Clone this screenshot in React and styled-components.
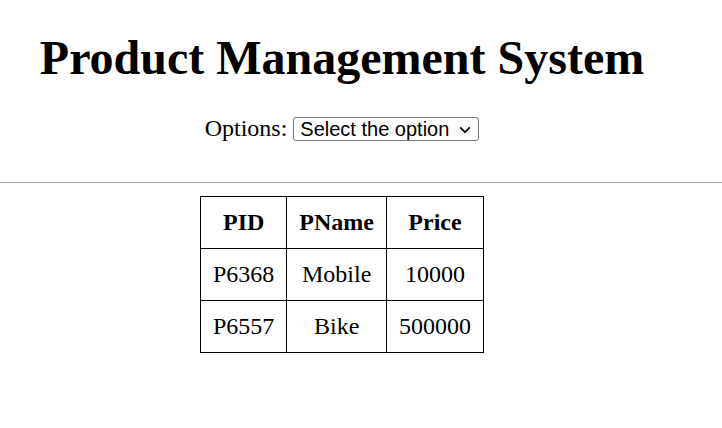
import React from 'react'
import styled, { createGlobalStyle } from 'styled-components'

const products = [
  { pid: 'P6368', pname: 'Mobile', price: '10000' },
  { pid: 'P6557', pname: 'Bike', price: '500000' },
]

export default function App() {
  return (
    <>
      <GlobalStyle />
      <Page>
        <Top>
          <Title>Product Management System</Title>
          <OptionsRow>
            <Label htmlFor="opt">Options:</Label>
            <SelectWrap>
              <Select id="opt" defaultValue="">
                <option value="">Select the option</option>
                <option value="add">Add product</option>
                <option value="view">View products</option>
              </Select>
              <Chevron viewBox="0 0 12 8" aria-hidden="true">
                <path d="M1.2 1.4 L6 6.2 L10.8 1.4" fill="none" stroke="#000" strokeWidth="1.8" />
              </Chevron>
            </SelectWrap>
          </OptionsRow>
        </Top>
        <Rule />
        <Content>
          <Table>
            <thead>
              <tr>
                <Head>PID</Head>
                <Head>PName</Head>
                <Head>Price</Head>
              </tr>
            </thead>
            <tbody>
              {products.map((p) => (
                <tr key={p.pid}>
                  <Cell>{p.pid}</Cell>
                  <Cell>{p.pname}</Cell>
                  <Cell>{p.price}</Cell>
                </tr>
              ))}
            </tbody>
          </Table>
        </Content>
      </Page>
    </>
  )
}

const GlobalStyle = createGlobalStyle`
  body {
    margin: 0;
    background: #fff;
    color: #000;
    font-family: "Liberation Serif", "Times New Roman", serif;
  }
`
const Page = styled.div`
  width: 684px;
`
const Top = styled.div`
  text-align: center;
  padding-top: 26px;
`
const Title = styled.h1`
  margin: 0;
  font-size: 48px;
  font-weight: bold;
  line-height: 64px;
`
const OptionsRow = styled.div`
  margin-top: 25px;
  display: flex;
  justify-content: center;
  align-items: center;
  gap: 6px;
`
const Label = styled.label`
  font-size: 24px;
`
const SelectWrap = styled.span`
  position: relative;
  display: inline-flex;
`
const Select = styled.select`
  appearance: none;
  font-family: "Liberation Sans", Arial, sans-serif;
  font-size: 20px;
  line-height: 22px;
  height: 24px;
  width: 186px;
  box-sizing: border-box;
  border: 1px solid #767676;
  border-radius: 3px;
  background: #fff;
  color: #000;
  padding: 0 0 0 6px;
`
const Chevron = styled.svg`
  position: absolute;
  right: 8px;
  top: 9px;
  width: 12px;
  height: 8px;
  pointer-events: none;
`
const Rule = styled.hr`
  width: 722px;
  margin: 40px 0 13px;
  border: none;
  border-top: 1px solid #9a9a9a;
  height: 0;
`
const Content = styled.div`
  display: flex;
  justify-content: center;
`
const Table = styled.table`
  border-collapse: collapse;
  border: 1px solid #000;
  font-size: 24px;
`
const Head = styled.th`
  border: 1px solid #000;
  padding: 12px 12px;
  font-weight: bold;
`
const Cell = styled.td`
  border: 1px solid #000;
  padding: 12px 12px;
  text-align: center;
`
